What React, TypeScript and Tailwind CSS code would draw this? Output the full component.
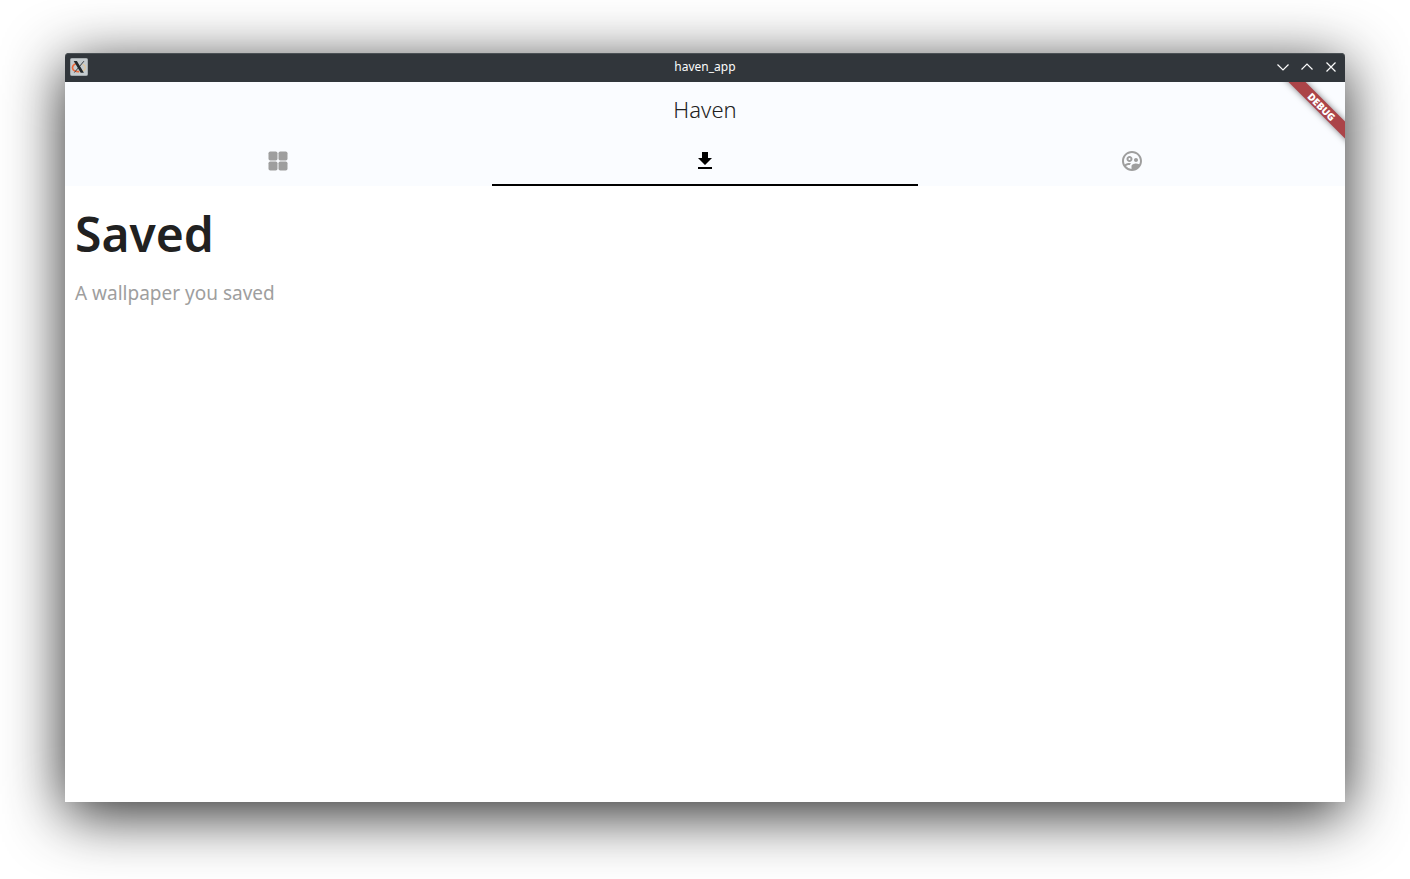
import { useState } from "react";
import {
  MdFileDownload,
  MdOutlineSupervisedUserCircle,
} from "react-icons/md";

function XLogo() {
  return (
    <svg viewBox="0 0 18 18" className="size-[18px]" aria-hidden="true">
      <rect x="0.5" y="0.5" width="17" height="17" rx="1" fill="#c5cbce" stroke="#a5abae" />
      <path d="M6.500 5.500C3.200 6.400 1.900 8.600 2.700 10.800c.7 1.900 3.200 3 6.300 2.900" fill="none" stroke="#ee6a3c" strokeWidth="1.700" />
      <path d="M9 13.700c3.500-.1 6-1.500 6.300-3.800.2-1.900-.9-3-2.600-3.700" fill="none" stroke="#e3c69a" strokeWidth="1.200" />
      <path d="M13.900 3.200 4.400 14.500" stroke="#3b4145" strokeWidth="1" />
      <path d="M3.700 3h3.200l7 11.700h-3.200z" fill="#22282b" />
    </svg>
  );
}

function GridIcon() {
  return (
    <svg viewBox="0 0 24 24" className="size-6" fill="currentColor" aria-hidden="true">
      <rect x="2.500" y="2.500" width="9" height="9" rx="1.800" />
      <rect x="12.500" y="2.500" width="9" height="9" rx="1.800" />
      <rect x="2.500" y="12.500" width="9" height="9" rx="1.800" />
      <rect x="12.500" y="12.500" width="9" height="9" rx="1.800" />
    </svg>
  );
}

const controls = [
  { label: "Minimize", path: "M2.500 5.500 8 11l5.500-5.500" },
  { label: "Maximize", path: "M2.500 10.500 8 5l5.500 5.500" },
  { label: "Close", path: "m3.500 3.500 9 9m0-9-9 9" },
];

const tabs = [
  { label: "Collections", icon: <GridIcon /> },
  { label: "Saved", icon: <MdFileDownload size={24} /> },
  { label: "Account", icon: <MdOutlineSupervisedUserCircle size={24} /> },
];

export default function App() {
  const [active, setActive] = useState(1);

  return (
    <div className="flex h-screen flex-col overflow-hidden bg-white px-[65px] pt-[53px] pb-[77px] font-['Noto_Sans',sans-serif]">
      <div className="flex min-h-0 grow flex-col rounded-t bg-white shadow-[0_12px_60px_rgba(0,0,0,0.85)]">
        <header className="grid h-[29px] shrink-0 grid-cols-3 items-center rounded-t bg-[#31363b] px-[5px] pb-px shadow-[inset_0_1px_0_#4b5155]">
          <XLogo />
          <span className="text-center text-xs leading-[18px] text-[#fcfcfc]">haven_app</span>
          <div className="flex justify-end gap-2 pr-px">
            {controls.map((control) => (
              <button key={control.label} type="button" aria-label={control.label} className="size-4">
                <svg viewBox="0 0 16 16" fill="none" stroke="#fcfcfc" strokeWidth="1.200" className="size-4">
                  <path d={control.path} />
                </svg>
              </button>
            ))}
          </div>
        </header>

        <div className="relative shrink-0 overflow-hidden bg-[#fafcff]">
          <h1 className="flex h-14 items-center justify-center pb-0.5 text-[22px] font-light text-[#212121]">
            Haven
          </h1>
          <div role="tablist" className="grid h-12 grid-cols-3">
            {tabs.map((tab, index) => (
              <button
                key={tab.label}
                type="button"
                role="tab"
                aria-label={tab.label}
                aria-selected={active === index}
                onClick={() => setActive(index)}
                className={
                  active === index
                    ? "flex items-center justify-center border-b-2 border-black text-black"
                    : "flex items-center justify-center border-b-2 border-transparent text-[#9e9e9e]"
                }
              >
                {tab.icon}
              </button>
            ))}
          </div>
          <div className="absolute top-[18px] -right-[26px] flex h-3 w-[100px] rotate-45 items-center justify-center bg-[#ab4448] pl-0.5 text-[10px] font-black text-white shadow-[0_0_6px_rgba(0,0,0,0.5)]">
            DEBUG
          </div>
        </div>

        <main className="grow px-2.5 pt-4">
          <h2 className="text-5xl leading-[64px] font-semibold text-[#212121]">Saved</h2>
          <p className="mt-3 text-[19px] leading-[30px] text-[#9e9e9e]">A wallpaper you saved</p>
        </main>
      </div>
    </div>
  );
}
